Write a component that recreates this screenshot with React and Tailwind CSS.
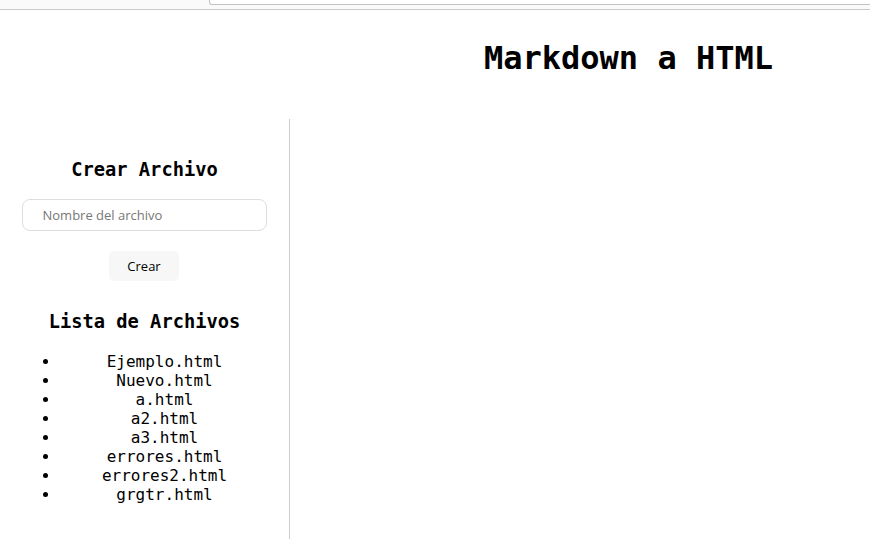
import React from 'react'

const archivos = [
  'Ejemplo.html',
  'Nuevo.html',
  'a.html',
  'a2.html',
  'a3.html',
  'errores.html',
  'errores2.html',
  'grgtr.html',
]

const mono = "font-['DejaVu_Sans_Mono','Liberation_Mono',monospace]"

export default function App() {
  return (
    <div className="w-[870px] h-[549px] bg-white overflow-hidden flex flex-col">
      {/* trozo de la barra del navegador */}
      <div className="h-[10px] bg-[#fafafa] border-b border-[#c9c9c9] flex shrink-0">
        <div className="w-[209px]" />
        <div className="flex-1 h-[5px] border-l border-b border-[#c4c4c4] rounded-bl-[3px] bg-white" />
      </div>

      <header className="h-[109px] shrink-0 flex items-center pl-[484px]">
        <h1 className={`${mono} text-[32px] font-bold text-black leading-[37px] mt-[-12px]`}>
          Markdown a HTML
        </h1>
      </header>

      <div className="flex">
        <aside className="w-[290px] h-[420px] border-r border-[#cccccc] px-5 pt-[40px] flex flex-col items-center">
          <h3 className={`${mono} text-[18.72px] font-bold text-black leading-[22px]`}>
            Crear Archivo
          </h3>
          <input
            type="text"
            placeholder="Nombre del archivo"
            className="mt-[18px] w-[245px] ml-[-1px] h-[32px] rounded-[8px] border border-[#dddddd] pl-[20px] text-[13px] font-['Open_Sans','Noto_Sans',sans-serif] placeholder:text-[#777777] outline-none"
          />
          <button className="mt-[20px] ml-[-1px] w-[70px] h-[30px] rounded-[5px] bg-[#f7f7f7] text-[13px] text-black font-['Open_Sans','Noto_Sans',sans-serif] pt-[1px]">
            Crear
          </button>
          <h3 className={`${mono} mt-[30px] text-[18.72px] font-bold text-black leading-[22px]`}>
            Lista de Archivos
          </h3>
          <ul className={`${mono} mt-[19px] w-full pl-10 list-disc text-[16px] leading-[19px] text-black text-center`}>
            {archivos.map((a) => (
              <li key={a}>{a}</li>
            ))}
          </ul>
        </aside>
        <main className="flex-1" />
      </div>
    </div>
  )
}
